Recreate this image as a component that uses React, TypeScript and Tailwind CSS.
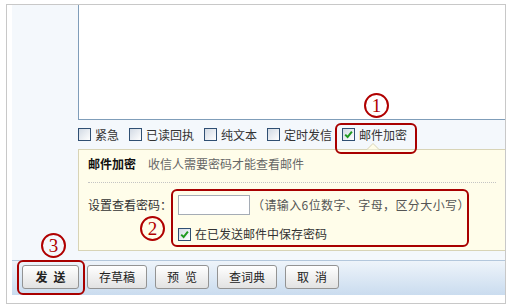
import React from "react";

const font = "font-['Noto_Sans_CJK_SC','Noto_Sans',sans-serif]";

function Box({ checked }: { checked?: boolean }) {
  return (
    <span className="flex h-[13px] w-[13px] shrink-0 items-center justify-center border border-[#2f4f73] bg-gradient-to-br from-[#d2dae4] to-white">
      {checked && (
        <svg width="9" height="9" viewBox="0 0 9 9">
          <path d="M1.2 4.6 L3.6 7 L7.9 1.6" stroke="#1f9a1f" strokeWidth="2" fill="none" />
        </svg>
      )}
    </span>
  );
}

function Option({ label, checked }: { label: string; checked?: boolean }) {
  return (
    <span className="flex items-center gap-[4px]">
      <Box checked={checked} />
      <span className="leading-[16px]">{label}</span>
    </span>
  );
}

function Button({ label, w, bold }: { label: string[]; w: string; bold?: boolean }) {
  return (
    <button
      className={`flex h-[24px] items-center justify-center gap-[6px] rounded-[3px] border border-[#939393] bg-gradient-to-b from-white to-[#e2e2e2] text-[12px] leading-none text-[#222] ${w} ${bold ? "font-bold" : ""}`}
    >
      {label.map((part) => (
        <span key={part}>{part}</span>
      ))}
    </button>
  );
}

function Num({ n, pos }: { n: string; pos: string }) {
  return (
    <span
      className={`absolute flex h-[25px] w-[25px] items-center justify-center rounded-full border-2 border-[#b00000] font-['Liberation_Serif',serif] text-[19px] leading-none text-[#b00000] ${pos}`}
    >
      {n}
    </span>
  );
}

export default function App() {
  return (
    <div className={`relative h-[308px] w-[512px] overflow-hidden bg-white text-[12px] text-[#333] ${font}`}>
      <div className="ml-[6px] mt-[4px] flex h-[300px] w-[500px] flex-col border border-[#c8c8c8] pl-[5px]">
        {/* editor + options */}
        <div className="flex h-[255px] shrink-0 bg-[#f4f8fc]">
          <div className="w-[66px] shrink-0" />
          <div className="flex flex-1 flex-col">
            <div className="h-[115px] shrink-0 border-b border-l border-[#7f9db9] bg-white" />
            <div className="flex h-[29px] shrink-0 items-center gap-[10px]">
              <Option label="紧急" />
              <Option label="已读回执" />
              <Option label="纯文本" />
              <Option label="定时发信" />
              <Option label="邮件加密" checked />
            </div>
            <div className="h-[102px] shrink-0 border-b border-l border-t border-[#d8d4b6] bg-[#fffdea]">
              <div className="mx-[9px] h-[33px] border-b border-dotted border-[#c4c4c4] pt-[4px]">
                <div className="flex leading-[20px]">
                  <span className="font-bold text-[#111]">邮件加密</span>
                  <span className="ml-[12px] text-[#666]">收信人需要密码才能查看邮件</span>
                </div>
              </div>
              <div className="ml-[9px] mt-[12px] grid grid-cols-[90px_1fr]">
                <span className="leading-[20px]">设置查看密码：</span>
                <div className="flex items-center gap-[2px]">
                  <span className="h-[20px] w-[72px] border border-[#a5acb5] bg-white" />
                  <span className="leading-[20px] tracking-[0.4px] text-[#555]">（请输入6位数字、字母，区分大小写）</span>
                </div>
                <span />
                <div className="mt-[9px] flex h-[20px] items-center gap-[4px]">
                  <Box checked />
                  <span className="leading-[16px]">在已发送邮件中保存密码</span>
                </div>
              </div>
            </div>
          </div>
        </div>
        {/* button bar */}
        <div className="flex h-[35px] shrink-0 gap-[8px] border-t border-[#b3c7dc] bg-gradient-to-b from-[#eef4fa] to-[#cadcef] pl-[10px] pt-[4px]">
          <Button label={["发", "送"]} w="w-[57px]" bold />
          <Button label={["存草稿"]} w="w-[60px]" />
          <Button label={["预", "览"]} w="w-[54px]" />
          <Button label={["查词典"]} w="w-[60px]" />
          <Button label={["取", "消"]} w="w-[54px]" />
        </div>
        <div className="flex-1 bg-white" />
      </div>

      {/* callout notch on the encryption panel */}
      <svg className="absolute left-[367px] top-[143px]" width="12" height="7" viewBox="0 0 12 7">
        <path d="M0 6.5 L6 0.5 L12 6.5" fill="#fffdea" stroke="#d8d4b6" strokeWidth="1" />
      </svg>

      {/* annotations */}
      <span className="absolute left-[335px] top-[123px] h-[31px] w-[82px] rounded-[6px] border-2 border-[#a80000]" />
      <span className="absolute left-[171px] top-[189px] h-[58px] w-[298px] rounded-[6px] border-2 border-[#a80000]" />
      <span className="absolute left-[17px] top-[260px] h-[35px] w-[68px] rounded-[6px] border-2 border-[#a80000]" />
      <Num n="1" pos="left-[364px] top-[93px]" />
      <Num n="2" pos="left-[140px] top-[216px]" />
      <Num n="3" pos="left-[41px] top-[233px]" />
    </div>
  );
}
